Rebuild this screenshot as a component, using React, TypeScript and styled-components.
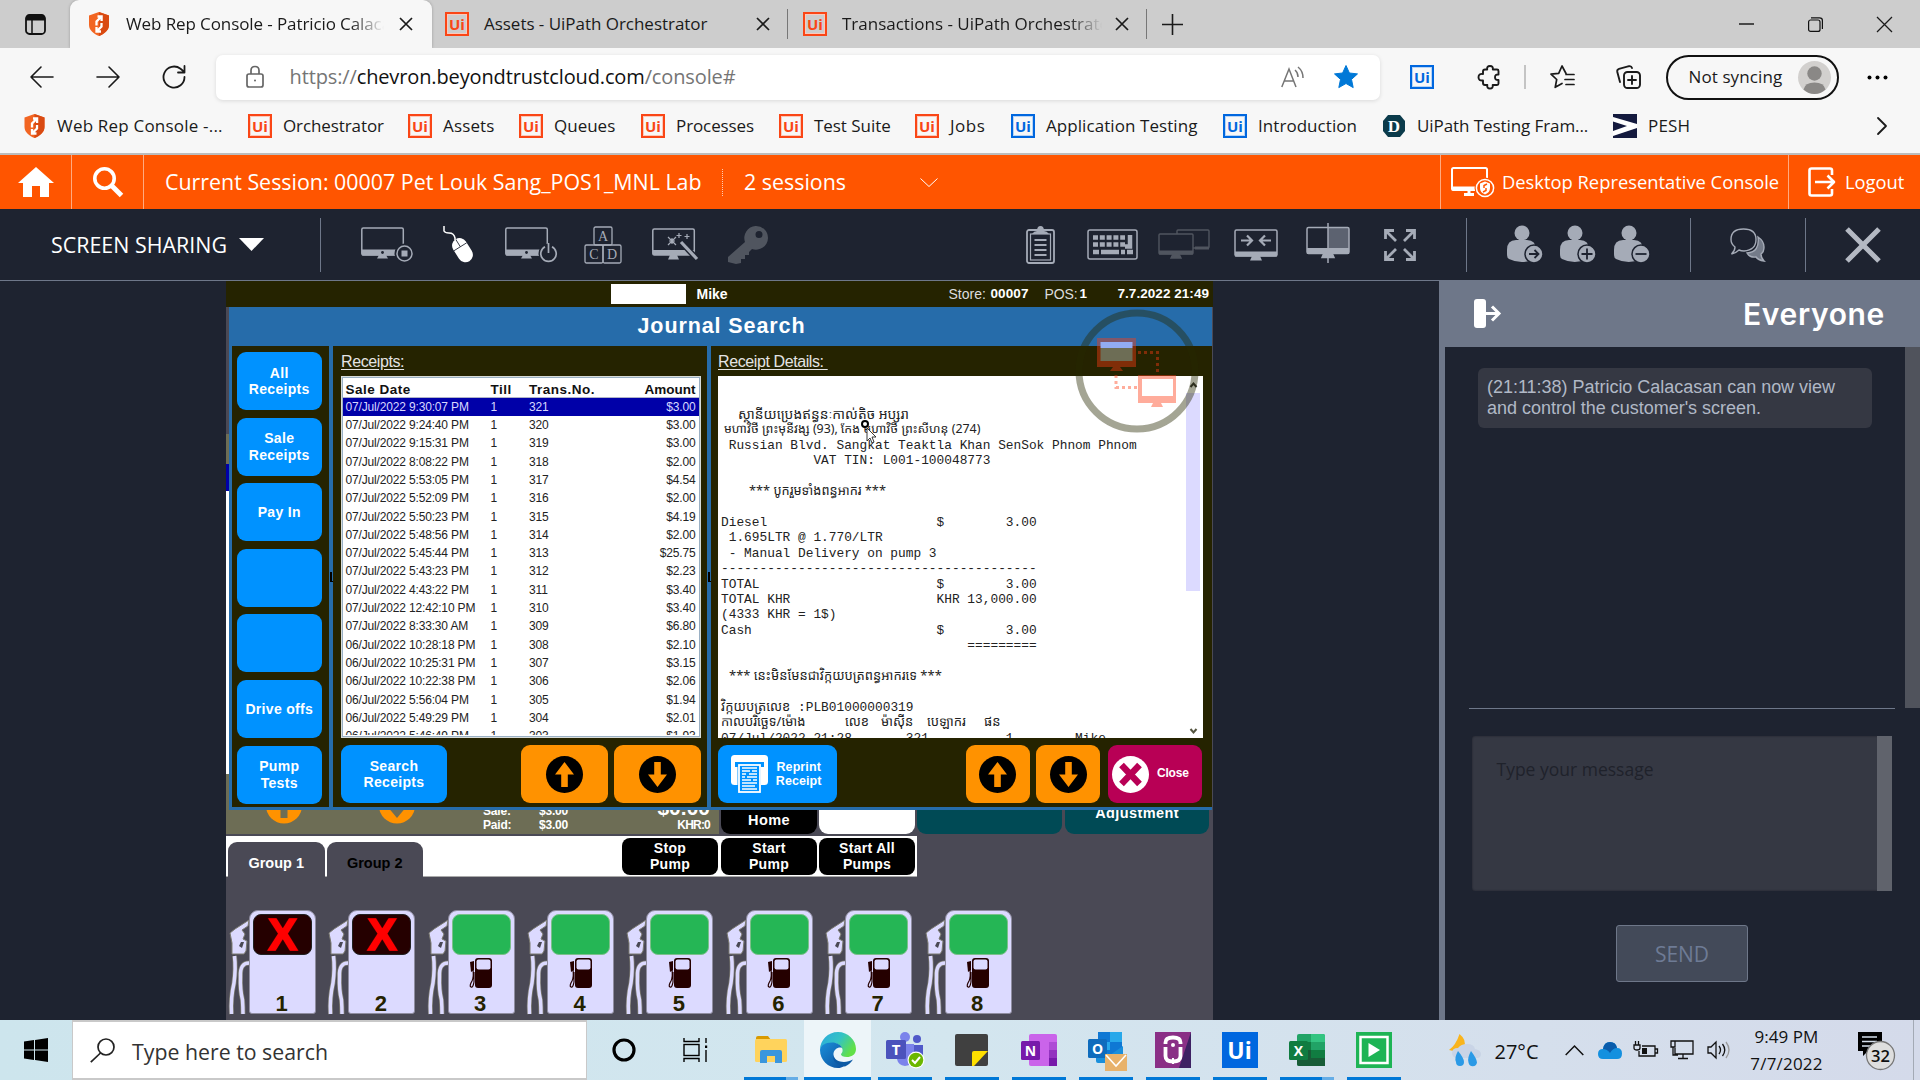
import React from 'react';
import styled, { createGlobalStyle, css } from 'styled-components';

const Global = createGlobalStyle`
  *, *::before, *::after { box-sizing: border-box; }
  html, body { margin: 0; padding: 0; background: #1e2330; }
  body { width: 1920px; height: 1080px; overflow: hidden; }
  svg { display: block; flex: none; overflow: visible; }
`;

const ui = `"Open Sans", "Noto Sans", sans-serif`;
const arial = `"Liberation Sans", Arial, sans-serif`;

const Page = styled.div`
  width: 1920px;
  height: 1080px;
  display: flex;
  flex-direction: column;
  overflow: hidden;
  font-family: ${ui};
`;

const Text = styled.span<{ $s: number; $ls?: number; $c?: string; $w?: number; $lh?: number; $pt?: number }>`
  font-size: ${p => p.$s}px;
  letter-spacing: ${p => p.$ls ?? 0}px;
  color: ${p => p.$c ?? 'inherit'};
  font-weight: ${p => p.$w ?? 400};
  white-space: pre;
  line-height: ${p => p.$lh ?? 1.3};
  padding-top: ${p => p.$pt ?? 0}px;
`;

const Slot = styled.div<{ $w: number; $ml?: number }>`
  flex: none;
  width: ${p => p.$w}px;
  margin-left: ${p => p.$ml ?? 0}px;
  display: flex;
  align-items: center;
  white-space: nowrap;
`;

const Rule = styled.div<{ $h: number; $ml: number; $c: string; $w?: number }>`
  flex: none;
  width: ${p => p.$w ?? 1}px;
  height: ${p => p.$h}px;
  margin-left: ${p => p.$ml}px;
  background: ${p => p.$c};
`;

/* ---------- Browser chrome ---------- */

const TabStrip = styled.div`
  height: 48px;
  flex: none;
  background: #cdcdcd;
  display: flex;
  align-items: center;
  color: #1a1a1a;
`;

const ActiveTab = styled.div`
  width: 362px;
  height: 48px;
  margin-left: 24px;
  background: #f7f7f7;
  border-radius: 9px 9px 0 0;
  box-shadow: 0 0 3px rgba(0, 0, 0, 0.25);
  display: flex;
  align-items: center;
`;

const Fade = styled.div<{ $w: number; $ml?: number }>`
  width: ${p => p.$w}px;
  margin-left: ${p => p.$ml ?? 15}px;
  overflow: hidden;
  flex: none;
  mask-image: linear-gradient(90deg, #000 calc(100% - 34px), transparent);
`;

const NavBar = styled.div`
  height: 58px;
  flex: none;
  background: #f7f7f7;
  display: flex;
  align-items: center;
  position: relative;
  z-index: 1;
`;

const AddressBar = styled.div`
  width: 1164px;
  height: 45px;
  margin-left: 30px;
  background: #fff;
  border-radius: 7px;
  box-shadow: 0 1px 4px rgba(0, 0, 0, 0.12);
  display: flex;
  align-items: center;
`;

const ProfilePill = styled.div`
  width: 173px;
  height: 45px;
  margin-left: 25px;
  border: 2px solid #111;
  border-radius: 23px;
  display: flex;
  align-items: center;
  padding-left: 21px;
  color: #1a1a1a;
`;

const Bookmarks = styled.div`
  height: 49px;
  flex: none;
  background: #f7f7f7;
  border-bottom: 2px solid #bcbcbc;
  display: flex;
  align-items: center;
  padding: 0 0 7px 23px;
  color: #1a1a1a;
`;

const Bookmark = styled.div<{ $w: number }>`
  width: ${p => p.$w}px;
  flex: none;
  display: flex;
  align-items: center;
  gap: 11px;
`;

const UiMark = styled.div<{ $blue?: boolean }>`
  width: 24px;
  height: 24px;
  flex: none;
  border: 2px solid ${p => (p.$blue ? '#0067df' : '#fa4616')};
  color: ${p => (p.$blue ? '#0067df' : '#fa4616')};
  outline: 1px solid ${p => (p.$blue ? '#b8d4f5' : '#fbc9bb')};
  outline-offset: -3px;
  display: flex;
  align-items: center;
  justify-content: center;
  font: 700 15px/1 ${ui};
`;

const Close = ({ s = 12, w = 1.7, c = '#1a1a1a' }: { s?: number; w?: number; c?: string }) => (
  <svg width={s} height={s} viewBox="0 0 12 12" stroke={c} strokeWidth={w}>
    <path d="M0 0L12 12M12 0L0 12" />
  </svg>
);

const Shield = ({ w = 20 }: { w?: number }) => (
  <svg width={w} height="24" viewBox="0 0 20 24">
    <path d="M10 0L20 3.5V13C20 18.5 15 22 10 24C5 22 0 18.5 0 13V3.5Z" fill="#f26522" />
    <path d="M10 0L20 3.5V13C20 18.5 15 22 10 24Z" fill="#d94a12" />
    <path d="M7.500 13.500V9.500L12 5M8.500 4.500H12.600V9" fill="none" stroke="#fff" strokeWidth="2.300" />
    <path d="M12.500 11V14.500L8 19M12 19.500H7.500V15" fill="none" stroke="#fff" strokeWidth="2.300" />
  </svg>
);

const TestMark = () => (
  <svg width="24" height="24" viewBox="0 0 24 24">
    <path d="M6 1H18L23 7V17L18 23H6L1 17V7Z" fill="#0b3b4b" />
    <text x="12" y="18" textAnchor="middle" fontFamily="Liberation Serif" fontWeight="700" fontSize="17" fill="#fff">D</text>
  </svg>
);

const PeshMark = () => (
  <svg width="24" height="24" viewBox="0 0 24 24">
    <path d="M0 0H24V24H0Z" fill="#141a3e" />
    <path d="M0 3L24 10V14L0 22V17L14 12L0 7.500Z" fill="#fff" />
  </svg>
);

type BM = { icon: 'shield' | 'o' | 'b' | 'd' | 'p'; label: string; w: number; ls?: number };
const bookmarks: BM[] = [
  { icon: 'shield', label: 'Web Rep Console -...', w: 225, ls: 0.2 },
  { icon: 'o', label: 'Orchestrator', w: 160, ls: -0.1 },
  { icon: 'o', label: 'Assets', w: 111, ls: 0.15 },
  { icon: 'o', label: 'Queues', w: 122 },
  { icon: 'o', label: 'Processes', w: 138, ls: -0.1 },
  { icon: 'o', label: 'Test Suite', w: 136, ls: -0.05 },
  { icon: 'o', label: 'Jobs', w: 96, ls: 0.5 },
  { icon: 'b', label: 'Application Testing', w: 212, ls: 0.07 },
  { icon: 'b', label: 'Introduction', w: 159, ls: 0.05 },
  { icon: 'd', label: 'UiPath Testing Fram...', w: 231, ls: -0.08 },
  { icon: 'p', label: 'PESH', w: 264, ls: 0.2 },
];

const BookmarkIcon = ({ kind }: { kind: BM['icon'] }) => {
  if (kind === 'shield') return <Shield w={23} />;
  if (kind === 'd') return <TestMark />;
  if (kind === 'p') return <PeshMark />;
  return <UiMark $blue={kind === 'b'}>Ui</UiMark>;
};

const line = { fill: 'none', stroke: '#1a1a1a', strokeWidth: 1.6, strokeLinecap: 'round', strokeLinejoin: 'round' } as const;

const Browser = () => (
  <>
    <TabStrip>
      <Slot $w={21} $ml={25}>
        <svg width="21" height="21" viewBox="0 0 21 21">
          <rect x="1" y="1" width="19" height="19" rx="3.500" fill="none" stroke="#111" strokeWidth="1.800" />
          <path d="M1 4Q1 1 4 1H17Q20 1 20 4V6.500H1Z" fill="#111" />
          <path d="M7 6V20" stroke="#111" strokeWidth="1.500" />
        </svg>
      </Slot>
      <ActiveTab>
        <Slot $w={20} $ml={19}><Shield /></Slot>
        <Fade $w={258} $ml={17}><Text $s={17} $ls={-0.1}>Web Rep Console - Patricio Calacasan</Text></Fade>
        <Slot $w={12} $ml={16}><Close /></Slot>
      </ActiveTab>
      <Slot $w={24} $ml={13}><UiMark>Ui</UiMark></Slot>
      <Slot $w={273} $ml={15}><Text $s={17} $ls={-0.03}>Assets - UiPath Orchestrator</Text></Slot>
      <Slot $w={12}><Close /></Slot>
      <Rule $h={30} $ml={18} $c="#777" />
      <Slot $w={24} $ml={15}><UiMark>Ui</UiMark></Slot>
      <Fade $w={260}><Text $s={17}>Transactions - UiPath Orchestrator</Text></Fade>
      <Slot $w={12} $ml={14}><Close /></Slot>
      <Rule $h={30} $ml={18} $c="#777" />
      <Slot $w={21} $ml={15}>
        <svg width="21" height="21" viewBox="0 0 21 21" stroke="#1a1a1a" strokeWidth="1.600"><path d="M10.500 0V21M0 10.500H21" /></svg>
      </Slot>
      <Slot $w={15} $ml={556}><svg width="15" height="2"><path d="M0 1H15" stroke="#111" strokeWidth="1.400" /></svg></Slot>
      <Slot $w={15} $ml={54}>
        <svg width="15" height="15" viewBox="0 0 15 15" fill="none" stroke="#111" strokeWidth="1.200">
          <rect x=".6" y="3" width="11.400" height="11.400" rx="2" /><path d="M3 .8H11.500Q14.400 .8 14.400 3.500V12" />
        </svg>
      </Slot>
      <Slot $w={15} $ml={54}><Close s={15} w={1} /></Slot>
    </TabStrip>
    <NavBar>
      <Slot $w={24} $ml={30}><svg width="24" height="22" viewBox="0 0 24 22" {...line}><path d="M23 11H1M11 1L1 11L11 21" /></svg></Slot>
      <Slot $w={24} $ml={42}><svg width="24" height="22" viewBox="0 0 24 22" {...line}><path d="M1 11H23M13 1L23 11L13 21" /></svg></Slot>
      <Slot $w={24} $ml={42}><svg width="24" height="24" viewBox="0 0 24 24" {...line} strokeWidth={1.800}><path d="M22.500 12A10.500 10.500 0 1 1 18.500 3.800L22.500 7M22.500 1V7.500H16" /></svg></Slot>
      <AddressBar>
        <Slot $w={18} $ml={30}>
          <svg width="18" height="24" viewBox="0 0 18 24" fill="none" stroke="#666" strokeWidth="1.700">
            <rect x="1" y="9" width="16" height="13" rx="2" /><path d="M5 9V5.500Q5 1.500 9 1.500T13 5.500V9" /><circle cx="9" cy="15.500" r="1" fill="#666" stroke="none" />
          </svg>
        </Slot>
        <Slot $w={991} $ml={25.5}>
          <Text $s={20} $ls={-0.13} $c="#757575">https://</Text>
          <Text $s={20} $ls={-0.13} $c="#111">chevron.beyondtrustcloud.com</Text>
          <Text $s={20} $ls={-0.13} $c="#757575">/console#</Text>
        </Slot>
        <Slot $w={23}>
          <svg width="24" height="22" viewBox="0 0 24 22" fill="none" stroke="#757575" strokeWidth="1.500"><path d="M.8 21L8 3L15 21M3.300 15H12.700M14 4Q17 6.500 17 11M17 1Q22 5 22 12" /></svg>
        </Slot>
        <Slot $w={24} $ml={30}>
          <svg width="24" height="24" viewBox="0 0 24 24"><path d="M12 .5L15.400 8L23.500 8.900L17.500 14.400L19.200 22.600L12 18.500L4.800 22.600L6.500 14.400L.5 8.900L8.600 8Z" fill="#0078d7" stroke="#0078d7" strokeLinejoin="round" /></svg>
        </Slot>
      </AddressBar>
      <Slot $w={24} $ml={30}><UiMark $blue>Ui</UiMark></Slot>
      <Slot $w={24} $ml={42.5}>
        <svg width="24" height="24" viewBox="0 0 24 24" {...line} strokeWidth={1.900}>
          <path d="M8 4.500H10.200Q9.600 1 13 1T15.800 4.500H20Q21.500 4.500 21.500 6V9.500Q18 9.200 18 12.200T21.500 15V18.500Q21.500 20 20 20H15.700Q16.300 23.500 13 23.500T10.300 20H8Q6 20 6 18V15.500Q1.500 16 1.500 12.200T6 9V6.500Q6 4.500 8 4.500Z" />
        </svg>
      </Slot>
      <Rule $h={24} $ml={23} $c="#c4c4c4" $w={2} />
      <Slot $w={25} $ml={24}>
        <svg width="25" height="24" viewBox="0 0 25 24" {...line} strokeWidth={1.700}>
          <path d="M16 8.500L12 1L8.700 8.300L1 9.200L6.700 14.500L5.200 22.300L12 18.500M16 9.500H24M15 14.500H24M16 19.500H24" />
        </svg>
      </Slot>
      <Slot $w={25} $ml={41}>
        <svg width="25" height="24" viewBox="0 0 25 24" {...line} strokeWidth={1.900}>
          <rect x="8" y="7" width="16" height="16" rx="3.500" /><path d="M16 11V19M12 15H20M4 17L1.300 7Q.8 4.500 3 3.800L13 1.200Q15.300 .7 16 3" />
        </svg>
      </Slot>
      <ProfilePill>
        <Slot $w={109}><Text $s={17} $ls={0.1}>Not syncing</Text></Slot>
        <svg width="33" height="33" viewBox="0 0 33 33">
          <circle cx="16.500" cy="16.500" r="16.500" fill="#d2d0ce" /><circle cx="16.500" cy="12.500" r="7.200" fill="#8a8886" />
          <path d="M5.500 28.500Q7 21.500 16.500 21.500T27.500 28.500Q22.500 33 16.500 33T5.500 28.500Z" fill="#8a8886" />
        </svg>
      </ProfilePill>
      <Slot $w={21} $ml={28.5}><svg width="21" height="5" viewBox="0 0 21 5"><circle cx="2.500" cy="2.500" r="2" /><circle cx="10.500" cy="2.500" r="2" /><circle cx="18.500" cy="2.500" r="2" /></svg></Slot>
    </NavBar>
    <Bookmarks>
      {bookmarks.map(b => (
        <Bookmark key={b.label} $w={b.w}>
          <BookmarkIcon kind={b.icon} />
          <Text $s={17} $ls={b.ls ?? 0}>{b.label}</Text>
        </Bookmark>
      ))}
      <svg width="10" height="18" viewBox="0 0 10 18" {...line} strokeWidth={1.800}><path d="M1 1L9 9L1 17" /></svg>
    </Bookmarks>
  </>
);

/* ---------- Console header ---------- */

const OrangeBar = styled.div`
  height: 54px;
  flex: none;
  background: #ff5500;
  color: #fff;
  display: flex;
  align-items: center;
`;

const Dotted = styled.div`
  height: 27px;
  border-left: 1px dotted rgba(255, 255, 255, 0.7);
`;

const OrangeHeader = () => (
  <OrangeBar>
    <Slot $w={36} $ml={18}>
      <svg width="36" height="30" viewBox="0 0 36 30" fill="#fff"><path d="M18 0L36 16H31V30H22V19H14V30H5V16H0Z" /></svg>
    </Slot>
    <Rule $h={54} $ml={17} $c="#ffaa80" />
    <Slot $w={32} $ml={20}>
      <svg width="32" height="30" viewBox="0 0 32 30" fill="none" stroke="#fff"><circle cx="12.500" cy="11.500" r="9.700" strokeWidth="3.600" /><path d="M19.500 18.500L29.500 28.500" strokeWidth="5" /></svg>
    </Slot>
    <Rule $h={54} $ml={19} $c="#ffaa80" />
    <Slot $w={557} $ml={21}><Text $s={21.4}>Current Session: 00007 Pet Louk Sang_POS1_MNL Lab</Text></Slot>
    <Dotted />
    <Slot $w={176} $ml={21}><Text $s={21.4}>2 sessions</Text></Slot>
    <svg width="18" height="9" viewBox="0 0 18 9" fill="none" stroke="#fff"><path d="M.5 .5L9 8.500L17.500 .5" /></svg>
    <Rule $h={54} $ml={502} $c="#ffaa80" />
    <Slot $w={44} $ml={10}>
      <svg width="44" height="30" viewBox="0 0 44 30" fill="none" stroke="#fff" strokeWidth="2">
        <rect x="1" y="1" width="35" height="22" rx="1.500" /><path d="M1 21.500H28" strokeWidth="4" /><path d="M18 23V27M13 27.500H23" strokeWidth="3" />
        <circle cx="34" cy="21" r="9.500" fill="#ff5500" stroke="#ff5500" /><circle cx="34" cy="21" r="8.600" strokeWidth="1.500" />
        <path d="M34 14.500L39 16.500V21Q39 25.500 34 27.500Q29 25.500 29 21V16.500Z" fill="#fff" stroke="none" /><path d="M33 21V18.500L36 17M35 21V23.500L32 25" stroke="#ff5500" strokeWidth="1.500" />
      </svg>
    </Slot>
    <Slot $w={278} $ml={7}><Text $s={18.35}>Desktop Representative Console</Text></Slot>
    <Rule $h={54} $ml={8} $c="#ffaa80" />
    <Slot $w={28} $ml={19}>
      <svg width="28" height="30" viewBox="0 0 28 30" fill="none" stroke="#fff" strokeWidth="2.600" strokeLinejoin="round">
        <path d="M24 8V3.500Q24 1.500 22 1.500H3.500Q1.500 1.500 1.500 3.500V26.500Q1.500 28.500 3.500 28.500H22Q24 28.500 24 26.500V22" /><path d="M7 15H26M19.500 8.500L26 15L19.500 21.500" />
      </svg>
    </Slot>
    <Slot $w={60} $ml={9}><Text $s={18.35}>Logout</Text></Slot>
  </OrangeBar>
);

const ToolBar = styled.div`
  height: 72px;
  flex: none;
  background: #1e2330;
  border-bottom: 1px solid #6e7789;
  display: flex;
  align-items: center;
  color: #fff;
`;

const g = '#a5abb7';
const Monitor = ({ children, c = g }: { children?: React.ReactNode; c?: string }) => (
  <svg width="52" height="36" viewBox="0 0 52 36" fill="none" stroke={c} strokeWidth="1.500">
    <rect x=".8" y="1" width="41.500" height="27" rx="1.500" /><path d="M1 25.500H42" strokeWidth="6" />
    <path d="M18 28H25L27 31.500H16Z" fill={c} stroke="none" /><circle cx="21.500" cy="25.500" r="1.400" fill="#1e2330" stroke="none" />
    {children}
  </svg>
);

const Person = ({ sign }: { sign: string }) => (
  <svg width="36" height="37" viewBox="0 0 36 37" fill={g}>
    <circle cx="15" cy="7" r="7.500" /><path d="M0 24Q0 14 9 14H20Q29 14 29 24V33Q14 39 2 33Q0 32 0 28Z" />
    <circle cx="27" cy="28" r="9" fill={g} stroke="#1e2330" strokeWidth="1.500" />
    <path d={sign} fill="none" stroke="#1e2330" strokeWidth="1.800" />
  </svg>
);

const Tools = () => (
  <ToolBar>
    <Slot $w={176} $ml={51}><Text $s={21.4} $ls={0.02}>SCREEN SHARING</Text></Slot>
    <Slot $w={25} $ml={12}><svg width="25" height="13" viewBox="0 0 25 13"><path d="M0 0H25L12.500 13Z" fill="#fff" /></svg></Slot>
    <Rule $h={54} $ml={56} $c="#6e7789" />
    <Slot $w={52} $ml={40}>
      <Monitor><circle cx="43.500" cy="26.500" r="9" fill="#1e2330" stroke="#1e2330" strokeWidth="2" /><circle cx="43.500" cy="26.500" r="7.500" /><rect x="40.500" y="23.500" width="6" height="6" fill={g} stroke="none" /></Monitor>
    </Slot>
    <Slot $w={33} $ml={30}>
      <svg width="33" height="37" viewBox="0 0 33 37" fill="none">
        <g transform="rotate(-32 20 25)"><rect x="12.500" y="11" width="15" height="26" rx="7.500" fill="#fff" /><path d="M12.500 20H27.500M20 11V20" stroke="#1e2330" strokeWidth=".8" /></g>
        <path d="M1 0V5Q2 7 6 7Q11 7 12 12V14" stroke="#fff" strokeWidth="1.500" />
      </svg>
    </Slot>
    <Slot $w={52} $ml={29}>
      <Monitor><circle cx="43.500" cy="26.500" r="9" fill="#1e2330" stroke="#1e2330" strokeWidth="2" /><path d="M40 19.800A7.700 7.700 0 1 0 47 19.800M43.500 16V26" strokeWidth="1.700" /></Monitor>
    </Slot>
    <Slot $w={38} $ml={27}>
      <svg width="38" height="38" viewBox="0 0 38 38" fill="none" stroke={g} strokeWidth="1.300">
        <rect x="10" y="1" width="18" height="18" rx="1.500" /><rect x="1" y="19" width="18" height="18" rx="1.500" /><rect x="19" y="19" width="18" height="18" rx="1.500" />
        <g fill={g} stroke="none" fontFamily="Liberation Serif" fontSize="14" textAnchor="middle"><text x="19" y="15">A</text><text x="10" y="33">C</text><text x="28" y="33">D</text></g>
      </svg>
    </Slot>
    <Slot $w={47} $ml={29.5}>
      <svg width="47" height="34" viewBox="0 0 47 34" fill="none" stroke={g} strokeWidth="1.500">
        <rect x=".8" y="1" width="41.500" height="26" rx="1.500" /><path d="M1 24.500H42" strokeWidth="5" /><path d="M18 27H25L27 31.500H16Z" fill={g} stroke="none" />
        <path d="M30 15L45 31" stroke="#1e2330" strokeWidth="6" /><path d="M29 14L45 31" strokeWidth="3.200" />
        <path d="M16 9L24 17M24 9L16 17M20 10V16M17 13H23M27 5V10M24.500 7.500H29.500M35 6V11M32.500 8.500H37.500" strokeWidth="1.200" />
      </svg>
    </Slot>
    <Slot $w={40} $ml={29.5}>
      <svg width="40" height="38" viewBox="0 0 40 38"><path d="M27.500 0A12 12 0 0 1 40 12A12 12 0 0 1 24 23L21 26V29H17V33H13V37L8 38L0 36V31L17 16A12 12 0 0 1 27.500 0ZM31 5A3.500 3.500 0 1 0 31 12A3.500 3.500 0 0 0 31 5Z" fill="#50555f" fillRule="evenodd" /></svg>
    </Slot>
    <Slot $w={29} $ml={258}>
      <svg width="29" height="38" viewBox="0 0 29 38" fill="none" stroke={g} strokeWidth="1.800">
        <rect x="1" y="4" width="27" height="33" rx="2" /><rect x="4.500" y="8" width="20" height="26" strokeWidth="1.200" /><path d="M6 8Q8 5 11 5Q11 0 14.500 0T18 5Q21 5 23 8Z" fill={g} stroke="none" /><path d="M8.500 14H20.500M8.500 19H20.500M8.500 24H20.500M8.500 29H20.500" />
      </svg>
    </Slot>
    <Slot $w={51} $ml={32}>
      <svg width="51" height="31" viewBox="0 0 51 31" fill="none" stroke={g}>
        <rect x="1" y="1" width="49" height="29" rx="2" strokeWidth="1.500" /><path d="M6 8.500H38M6 15.500H38" strokeWidth="4.500" strokeDasharray="5 1.800" /><path d="M6 23H12M14 23H32M34 23H38M40 23H46M43 6V17.500H38" strokeWidth="4.500" />
      </svg>
    </Slot>
    <Slot $w={52} $ml={20}>
      <svg width="52" height="31" viewBox="0 0 52 31" fill="none" stroke="#50555f" strokeWidth="1.400">
        <rect x="19" y="1" width="32" height="18" rx="1" /><path d="M37 19H51" strokeWidth="3" /><rect x="1" y="5" width="34" height="20" rx="1" fill="#1e2330" /><path d="M1 23.500H35" strokeWidth="4" /><path d="M15 25H21L23 29H13Z" fill="#50555f" />
      </svg>
    </Slot>
    <Slot $w={44} $ml={24}>
      <svg width="44" height="32" viewBox="0 0 44 32" fill="none" stroke={g} strokeWidth="1.500">
        <rect x="1" y="1" width="42" height="26" rx="1.500" /><path d="M1 25H43" strokeWidth="5" /><path d="M18 27H26L28 31.500H16Z" fill={g} stroke="none" /><path d="M7 11.500H17M13 6.500L18 11.500L13 16.500M37 11.500H27M31 6.500L26 11.500L31 16.500" strokeWidth="2.200" />
      </svg>
    </Slot>
    <Slot $w={44} $ml={28}>
      <svg width="44" height="46" viewBox="0 0 44 46" fill="none" stroke={g} strokeWidth="1.500">
        <rect x="22" y="6" width="21" height="22" fill="#5c6270" stroke="none" /><rect x="1" y="5.500" width="42" height="26" rx="1.500" /><path d="M1 29H43" strokeWidth="6" /><path d="M18 31H26L28 35.500H16ZM22 1V41" fill={g} />
      </svg>
    </Slot>
    <Slot $w={32} $ml={34}>
      <svg width="32" height="32" viewBox="0 0 32 32" fill="none" stroke={g} strokeWidth="2.800"><path d="M1.500 10V1.500H10M2 2L12 12M22 1.500H30.500V10M30 2L20 12M1.500 22V30.500H10M2 30L12 20M22 30.500H30.500V22M30 30L20 20" /></svg>
    </Slot>
    <Rule $h={54} $ml={50} $c="#6e7789" />
    <Slot $w={36} $ml={39.5}><Person sign="M22 28H31M27.500 24L31.500 28L27.500 32" /></Slot>
    <Slot $w={36} $ml={17.5}><Person sign="M21.500 28H32.500M27 22.500V33.500" /></Slot>
    <Slot $w={36} $ml={18}><Person sign="M21.500 28H32.500" /></Slot>
    <Rule $h={54} $ml={40} $c="#6e7789" />
    <Slot $w={36} $ml={39}>
      <svg width="36" height="34" viewBox="0 0 36 34" fill="none" stroke={g} strokeWidth="1.400">
        <path d="M17 25Q30 24 28 9Q34 13 34 19Q34 24 31 26Q31 30 34 33Q28 32 26 29Q20 30 17 25Z" fill="#747b89" /><path d="M13.500 1Q26 1 26 11.500T14 23Q11 23 9 22Q6 25 1.500 26Q5 23 5 19Q1 16 1 11.500Q1 1 13.500 1Z" fill="#1e2330" />
      </svg>
    </Slot>
    <Rule $h={54} $ml={39} $c="#6e7789" />
    <Slot $w={32} $ml={41}><Close s={32} w={1.900} c="#b4b9c3" /></Slot>
  </ToolBar>
);

/* ---------- Remote POS screen ---------- */

const Main = styled.div`
  height: 739px;
  flex: none;
  display: flex;
  background: #1e2330;
`;

const Pos = styled.div`
  position: relative;
  width: 987px;
  height: 739px;
  margin-left: 226px;
  flex: none;
  overflow: hidden;
  background: #4a4955;
  font-family: ${arial};
  display: flex;
  flex-direction: column;
`;

const PosTop = styled.div`
  height: 26px;
  flex: none;
  background: #252300;
  color: #fff;
  display: flex;
  align-items: center;
`;

const BlankBox = styled.div`
  width: 75px;
  height: 20px;
  margin-left: 385px;
  background: #fff;
`;

const DialogRow = styled.div`
  display: flex;
  height: 503px;
  flex: none;
  padding-right: 1px;
`;

const Behind = styled.div`
  width: 3px;
  flex: none;
  background: linear-gradient(#4a4955 127px, #6d6d55 127px 157px, #0000a8 157px 184px, #fff 184px 467px, #6d6d55 467px);
`;

const Dialog = styled.div`
  flex: 1;
  background: #266caa;
  display: flex;
  flex-direction: column;
  padding: 0 0 3px 3px;
`;

const DialogTitle = styled.div`
  height: 39px;
  flex: none;
  display: flex;
  align-items: center;
  justify-content: center;
  color: #fff;
  padding-right: 1px;
`;

const Panels = styled.div`
  flex: 1;
  display: flex;
  gap: 4px;
`;

const Panel = styled.div<{ $w: number; $pad: string }>`
  width: ${p => p.$w}px;
  flex: none;
  background: #252300;
  padding: ${p => p.$pad};
  display: flex;
  flex-direction: column;
`;

const PosButton = styled.div<{ $w: number; $bg?: string; $ml?: number }>`
  width: ${p => p.$w}px;
  height: 58px;
  flex: none;
  margin-left: ${p => p.$ml ?? 0}px;
  background: ${p => p.$bg ?? '#0092ff'};
  border-radius: 9px;
  display: flex;
  align-items: center;
  justify-content: center;
  text-align: center;
  color: #fff;
  font: 700 14px/16.4px ${arial};
  letter-spacing: 0.3px;
  white-space: pre;
`;

const SideButtons = styled.div`
  display: flex;
  flex-direction: column;
  gap: 7.6px;
`;

const PanelLabel = styled.div`
  height: 22px;
  margin-bottom: 3px;
  color: #e4e4e4;
  font-size: 16px;
  letter-spacing: -0.4px;
  line-height: 22px;
  text-decoration: underline;
  text-underline-offset: 2px;
  white-space: pre;
`;

const Table = styled.div`
  height: 362px;
  background: #fff;
  border: 1px solid #d8dcd8;
  box-shadow: inset 0 0 0 1px #9ab0c4;
  padding: 1px 1px 2px;
  overflow: hidden;
`;

const Clip = styled.div`
  height: 100%;
  overflow: hidden;
`;

const cols = css`
  display: grid;
  grid-template-columns: 145px 38.5px 1fr auto;
  padding: 0 3.5px 0 2.5px;
  align-items: center;
`;

const HeadRow = styled.div`
  ${cols}
  height: 19.5px;
  font: 700 13.5px/18px ${arial};
  letter-spacing: 0.5px;
  padding-top: 3px;
  border-bottom: 1px solid #b0b4c8;
  color: #111;
`;

const HeadAmount = styled.span`
  letter-spacing: 0;
`;

const DataRow = styled.div<{ $on?: boolean }>`
  ${cols}
  height: 18.32px;
  font-size: 12px;
  letter-spacing: -0.16px;
  line-height: 18px;
  color: ${p => (p.$on ? '#d8d8ff' : '#222')};
  background: ${p => (p.$on ? '#0000a8' : 'transparent')};
`;

const ButtonRow = styled.div`
  display: flex;
  margin-top: 7px;
`;

const ReceiptBox = styled.div`
  width: 485px;
  height: 362px;
  background: #fff;
  display: flex;
  justify-content: space-between;
  overflow: hidden;
  color: #222;
`;

const ReceiptText = styled.div`
  padding: 31px 0 0 3px;
  font-family: "Liberation Mono", "Noto Sans Khmer", "Khmer OS", monospace;
  font-size: 12.83px;
`;

const RLine = styled.div<{ $pl?: number }>`
  height: 15.43px;
  line-height: 15.43px;
  padding-left: ${p => p.$pl ?? 0}px;
  white-space: pre;
`;

const Khmer = styled.span<{ $s?: number; $w?: number }>`
  display: inline-block;
  width: ${p => (p.$w ? `${p.$w}px` : 'auto')};
  height: 15.43px;
  font-family: "Noto Sans Khmer", "Khmer OS", "Noto Sans", sans-serif;
  font-size: ${p => p.$s ?? 13}px;
  line-height: 13px;
  vertical-align: top;
`;

const ScrollTrack = styled.div`
  width: 18px;
  padding: 6px 2px 4px 0;
  display: flex;
  flex-direction: column;
  align-items: center;
`;

const ScrollThumb = styled.div`
  width: 14px;
  height: 198px;
  margin: 5px 0 auto;
  background: #dcdaff;
`;

const Badge = styled.div`
  position: absolute;
  left: 849px;
  top: 28px;
`;

const Pointer = styled.div`
  position: absolute;
  left: 635px;
  top: 138px;
`;

const EdgeMark = styled.div<{ $x: number }>`
  position: absolute;
  left: ${p => p.$x}px;
  top: 291px;
  width: 3px;
  height: 10px;
  border-left: 2px solid #000;
  border-bottom: 1px solid #000;
`;

const Arrow = ({ down }: { down?: boolean }) => (
  <svg width="37" height="37" viewBox="0 0 37 37">
    <circle cx="18.500" cy="18.500" r="18.500" fill="#000" />
    <path d={down ? 'M15.200 6H21.800V18.500H28L18.500 31L9 18.500H15.200Z' : 'M15.200 31H21.800V18.500H28L18.500 6L9 18.500H15.200Z'} fill="#ff9200" />
  </svg>
);

const sales: [string, string, string][] = [
  ['07/Jul/2022 9:30:07 PM', '321', '$3.00'],
  ['07/Jul/2022 9:24:40 PM', '320', '$3.00'],
  ['07/Jul/2022 9:15:31 PM', '319', '$3.00'],
  ['07/Jul/2022 8:08:22 PM', '318', '$2.00'],
  ['07/Jul/2022 5:53:05 PM', '317', '$4.54'],
  ['07/Jul/2022 5:52:09 PM', '316', '$2.00'],
  ['07/Jul/2022 5:50:23 PM', '315', '$4.19'],
  ['07/Jul/2022 5:48:56 PM', '314', '$2.00'],
  ['07/Jul/2022 5:45:44 PM', '313', '$25.75'],
  ['07/Jul/2022 5:43:23 PM', '312', '$2.23'],
  ['07/Jul/2022 4:43:22 PM', '311', '$3.40'],
  ['07/Jul/2022 12:42:10 PM', '310', '$3.40'],
  ['07/Jul/2022 8:33:30 AM', '309', '$6.80'],
  ['06/Jul/2022 10:28:18 PM', '308', '$2.10'],
  ['06/Jul/2022 10:25:31 PM', '307', '$3.15'],
  ['06/Jul/2022 10:22:38 PM', '306', '$2.06'],
  ['06/Jul/2022 5:56:04 PM', '305', '$1.94'],
  ['06/Jul/2022 5:49:29 PM', '304', '$2.01'],
  ['06/Jul/2022 5:46:49 PM', '303', '$1.93'],
];

const JournalDialog = () => (
  <DialogRow>
    <Behind />
    <Dialog>
      <DialogTitle><Text $s={21.5} $w={700} $ls={0.9}>Journal Search</Text></DialogTitle>
      <Panels>
        <Panel $w={97} $pad="6px 0 0 5px">
          <SideButtons>
            {['All\nReceipts', 'Sale\nReceipts', 'Pay In', '', ' ', 'Drive offs', 'Pump\nTests'].map(t => (
              <PosButton key={t} $w={84.5}>{t}</PosButton>
            ))}
          </SideButtons>
        </Panel>
        <Panel $w={374} $pad="5px 6px 0 8px">
          <PanelLabel>Receipts:</PanelLabel>
          <Table>
            <Clip>
              <HeadRow><span>Sale Date</span><span>Till</span><span>Trans.No.</span><HeadAmount>Amount</HeadAmount></HeadRow>
              {sales.map(([d, n, a], i) => (
                <DataRow key={n} $on={i === 0}><span>{d}</span><span>1</span><span>{n}</span><span>{a}</span></DataRow>
              ))}
            </Clip>
          </Table>
          <ButtonRow>
            <PosButton $w={106}>{'Search\nReceipts'}</PosButton>
            <PosButton $w={87} $ml={74} $bg="#ff9200"><Arrow /></PosButton>
            <PosButton $w={87} $ml={6} $bg="#ff9200"><Arrow down /></PosButton>
          </ButtonRow>
        </Panel>
        <Panel $w={501} $pad="5px 0 0 7px">
          <PanelLabel>Receipt Details: </PanelLabel>
          <ReceiptBox>
            <ReceiptText>
              <RLine $pl={17}><Khmer $s={13.8}>ស្ថានីយប្រេងឥន្ធនៈកាល់តិច អប្សរា</Khmer></RLine>
              <RLine $pl={3}><Khmer $s={12.4}>មហាវិថី ព្រះមុនីវង្ស (93), កែង មហាវិថី ព្រះសីហនុ (274)</Khmer></RLine>
              <RLine> Russian Blvd. Sangkat Teaktla Khan SenSok Phnom Phnom</RLine>
              <RLine>{'            VAT TIN: L001-100048773'}</RLine>
              <RLine />
              <RLine $pl={28}><Khmer $s={12.8}>*** បូករួមទាំងពន្ធអាករ ***</Khmer></RLine>
              <RLine />
              <RLine>{'Diesel                      $        3.00'}</RLine>
              <RLine>{' 1.695LTR @ 1.770/LTR'}</RLine>
              <RLine>{' - Manual Delivery on pump 3'}</RLine>
              <RLine>{'-'.repeat(41)}</RLine>
              <RLine>{'TOTAL                       $        3.00'}</RLine>
              <RLine>{'TOTAL KHR                   KHR 13,000.00'}</RLine>
              <RLine>{'(4333 KHR = 1$)'}</RLine>
              <RLine>{'Cash                        $        3.00'}</RLine>
              <RLine>{'                                ========='}</RLine>
              <RLine />
              <RLine $pl={8}><Khmer>*** នេះមិនមែនជាវិក្កយបត្រពន្ធអាករទេ ***</Khmer></RLine>
              <RLine />
              <RLine><Khmer $w={77}>វិក្កយបត្រលេខ</Khmer>:PLB01000000319</RLine>
              <RLine>
                <Khmer $w={124}>កាលបរិច្ឆេទ/ម៉ោង</Khmer><Khmer $w={36}>លេខ</Khmer><Khmer $w={46}>ម៉ាស៊ីន</Khmer><Khmer $w={57}>បេឡាករ</Khmer><Khmer>ផន</Khmer>
              </RLine>
              <RLine>{'07/Jul/2022 21:28       321          1        Mike'}</RLine>
            </ReceiptText>
            <ScrollTrack>
              <svg width="7" height="6" viewBox="0 0 7 6" fill="none" stroke="#333" strokeWidth="2"><path d="M.5 5L3.500 1.500L6.500 5" /></svg>
              <ScrollThumb />
              <svg width="7" height="6" viewBox="0 0 7 6" fill="none" stroke="#555540" strokeWidth="2"><path d="M.5 1L3.500 4.500L6.500 1" /></svg>
            </ScrollTrack>
          </ReceiptBox>
          <ButtonRow>
            <PosButton $w={118.5}>
              <svg width="37" height="38" viewBox="0 0 37 38">
                <rect width="37" height="30" rx="3.500" fill="#fff" /><rect x="4" y="7" width="29" height="5" fill="#0092ff" />
                <path d="M6.500 9V30H30V9" fill="#0092ff" /><rect x="8" y="10" width="21" height="27" fill="#0092ff" stroke="#fff" strokeWidth="1.800" />
                <path d="M11 13H26M11 16H19M21 16H26M11 19H15M18 19H26M11 22H14M16 22H26M11 25H20M22 25H26M11 28H26M11 31H24M11 34H26" stroke="#fff" strokeWidth="1.700" />
              </svg>
              <Slot $w={48} $ml={8}><Text $s={12.5} $w={700} $ls={0.1} $lh={1.13}>{'Reprint\nReceipt'}</Text></Slot>
            </PosButton>
            <PosButton $w={64} $ml={129} $bg="#ff9200"><Arrow /></PosButton>
            <PosButton $w={64} $ml={6.5} $bg="#ff9200"><Arrow down /></PosButton>
            <PosButton $w={94.5} $ml={7.5} $bg="#b80055">
              <svg width="37" height="37" viewBox="0 0 37 37"><circle cx="18.500" cy="18.500" r="18.500" fill="#fff" /><path d="M9.500 9L27.500 28M27.500 9L9.500 28" stroke="#b80055" strokeWidth="6.500" /></svg>
              <Slot $w={41} $ml={8.5}><Text $s={12} $w={700} $ls={-0.2}>Close</Text></Slot>
            </PosButton>
          </ButtonRow>
        </Panel>
      </Panels>
    </Dialog>
  </DialogRow>
);

const Totals = styled.div`
  height: 24px;
  flex: none;
  display: flex;
  align-items: stretch;
  overflow: hidden;
`;

const TotalsLeft = styled.div`
  width: 493px;
  background: #6d6d55;
  color: #fff;
  display: flex;
  align-items: flex-end;
`;

const TotalCol = styled.div<{ $w: number; $ml: number; $right?: boolean }>`
  width: ${p => p.$w}px;
  margin-left: ${p => p.$ml}px;
  display: flex;
  flex-direction: column;
  align-items: ${p => (p.$right ? 'flex-end' : 'flex-start')};
  font: 700 12px/14px ${arial};
  letter-spacing: ${p => (p.$right ? -0.8 : -0.2)}px;
  padding-bottom: 2px;
`;

const BigTotal = styled.span`
  font-size: 21px;
  line-height: 17px;
  letter-spacing: 0;
  margin-bottom: 2px;
`;

const ArrowStub = styled.div<{ $ml: number }>`
  width: 36px;
  height: 37px;
  flex: none;
  margin: 0 0 10.5px ${p => p.$ml}px;
`;

const Stub = styled.div<{ $w: number; $ml: number; $bg: string; $pb?: number }>`
  width: ${p => p.$w}px;
  height: 24px;
  margin-left: ${p => p.$ml}px;
  background: ${p => p.$bg};
  border-radius: 0 0 9px 9px;
  display: flex;
  justify-content: center;
  align-items: flex-end;
  padding-bottom: ${p => p.$pb ?? 0}px;
  color: #fff;
  font: 700 14.5px/16px ${arial};
  letter-spacing: 0.4px;
`;

const GroupBar = styled.div`
  width: 691px;
  height: 41px;
  margin-top: 2px;
  flex: none;
  background: #fff;
  border-bottom: 1px solid #aaa;
  display: flex;
  align-items: flex-end;
  padding-left: 2px;
`;

const GroupTab = styled.div<{ $on?: boolean }>`
  width: 96.5px;
  height: 35px;
  margin: 0 2px -1px 0;
  background: #4a4955;
  border-radius: 9px 9px 0 0;
  display: flex;
  align-items: center;
  justify-content: center;
  padding-top: 6px;
  font: 700 14.5px/16px ${arial};
  color: ${p => (p.$on ? '#fff' : '#000')};
`;

const PumpAction = styled(PosButton)`
  height: 37px;
  margin-bottom: 1.5px;
  background: #000;
  border-radius: 8px;
`;

const PumpRow = styled.div`
  display: flex;
  padding: 33px 0 0 3px;
  gap: 12.36px;
`;

const Pump = styled.div`
  width: 87px;
  height: 104px;
  flex: none;
  display: flex;
`;

const PumpCard = styled.div`
  width: 67px;
  height: 104px;
  background: #dcdaff;
  border: 1px solid #8f8da0;
  border-radius: 9px 9px 3px 3px;
  display: flex;
  flex-direction: column;
  align-items: center;
  padding-top: 3px;
`;

const PumpScreen = styled.div<{ $bad: boolean }>`
  width: 59px;
  height: 41px;
  flex: none;
  border-radius: 8px;
  background: ${p => (p.$bad ? '#250000' : '#25b655')};
  border: 1px solid ${p => (p.$bad ? '#222' : '#7bc08a')};
  color: #ff0000;
  display: flex;
  align-items: center;
  justify-content: center;
  font: 700 44px/38px ${arial};
  -webkit-text-stroke: 1.5px #ff0000;
`;

const MiniBox = styled.div`
  height: 32px;
  flex: none;
  margin-top: 2px;
`;

const PumpNo = styled.div`
  font: 700 22px/24px ${arial};
  color: #252300;
  margin: 3px 2px 0 0;
`;

const Hose = () => (
  <svg width="20" height="104" viewBox="0 0 20 104">
    <path d="M20 10L6 19L1 23L3 33L3 44H15L17 41L18 31L14 29L16 24L13 20L19 16Z" fill="#dcdaff" stroke="#7b7a70" />
    <path d="M10 36L12 32H15L13 38Z" fill="#4a4955" />
    <path d="M5.500 46Q7 58 5 73Q1.500 88 2.500 104M20 53Q11 53 11.500 66Q11 80 13.500 90Q14 97 14 104" fill="none" stroke="#7b7a70" strokeWidth="5" />
    <path d="M5.500 46Q7 58 5 73Q1.500 88 2.500 104M20 53Q11 53 11.500 66Q11 80 13.500 90Q14 97 14 104" fill="none" stroke="#dcdaff" strokeWidth="3.500" />
  </svg>
);

const MiniPump = () => (
  <svg width="24" height="32" viewBox="0 0 24 32">
    <rect x="6" y="1" width="17" height="30" rx="3" fill="#250000" /><rect x="7.500" y="2.500" width="14" height="10" rx="2" fill="#dcdaff" />
    <path d="M1 5L5 4V13L2 15Z" fill="#250000" /><path d="M4 13Q5 20 3 24Q0 29 2 30T5 25V15" fill="none" stroke="#250000" strokeWidth="1.200" />
  </svg>
);

const Remote = () => (
  <Pos>
    <PosTop>
      <BlankBox />
      <Slot $w={252} $ml={10.5}><Text $s={14} $w={700}>Mike</Text></Slot>
      <Slot $w={42}><Text $s={14} $c="#ddd">Store:</Text></Slot>
      <Slot $w={54}><Text $s={13.5} $w={700} $ls={0.1}>00007</Text></Slot>
      <Slot $w={35}><Text $s={14} $c="#ddd" $ls={-0.1}>POS:</Text></Slot>
      <Slot $w={38}><Text $s={13.5} $w={700}>1</Text></Slot>
      <Text $s={13.5} $w={700} $ls={0.05}>7.7.2022 21:49</Text>
    </PosTop>
    <JournalDialog />
    <Totals>
      <TotalsLeft>
        <ArrowStub $ml={39.5}><svg width="36" height="37" viewBox="0 0 36 37"><circle cx="18" cy="18.500" r="18" fill="#ff9200" /><path d="M14.500 18H21.500V31H14.500Z" fill="#6d6d55" /></svg></ArrowStub>
        <ArrowStub $ml={77}><svg width="36" height="37" viewBox="0 0 36 37"><circle cx="18" cy="18.500" r="18" fill="#ff9200" /><path d="M8 19H28L18 31Z" fill="#6d6d55" /></svg></ArrowStub>
        <TotalCol $w={56} $ml={68.5}><span>Sale:</span><span>Paid:</span></TotalCol>
        <TotalCol $w={40} $ml={0}><span>$3.00</span><span>$3.00</span></TotalCol>
        <TotalCol $w={70} $ml={61} $right><BigTotal>$0.00</BigTotal><span>KHR:0</span></TotalCol>
      </TotalsLeft>
      <Stub $w={96} $ml={2} $bg="#000" $pb={6}>Home</Stub>
      <Stub $w={96} $ml={2} $bg="#fff" />
      <Stub $w={145} $ml={2} $bg="#004a55" />
      <Stub $w={144} $ml={3} $bg="#004a55" $pb={13}>Adjustment</Stub>
    </Totals>
    <GroupBar>
      <GroupTab $on>Group 1</GroupTab>
      <GroupTab>Group 2</GroupTab>
      <PumpAction $w={96} $ml={197}>{'Stop\nPump'}</PumpAction>
      <PumpAction $w={96} $ml={3}>{'Start\nPump'}</PumpAction>
      <PumpAction $w={96} $ml={2}>{'Start All\nPumps'}</PumpAction>
    </GroupBar>
    <PumpRow>
      {[1, 2, 3, 4, 5, 6, 7, 8].map(n => (
        <Pump key={n}>
          <Hose />
          <PumpCard>
            <PumpScreen $bad={n < 3}>{n < 3 ? 'X' : ''}</PumpScreen>
            <MiniBox>{n > 2 && <MiniPump />}</MiniBox>
            <PumpNo>{n}</PumpNo>
          </PumpCard>
        </Pump>
      ))}
    </PumpRow>
    <EdgeMark $x={104} />
    <EdgeMark $x={482} />
    <Badge>
      <svg width="124" height="124" viewBox="0 0 124 124" fill="none">
        <circle cx="62" cy="62" r="58" stroke="rgb(37,40,0)" strokeOpacity=".42" strokeWidth="7" />
        <g opacity=".42"><path d="M22 29H61V58H22Z" fill="#ff3c14" /><path d="M38 58H45L48 62H35Z" fill="#ff3c14" /></g>
        <path d="M25.500 33H57.500V39H25.500Z" fill="#92acf4" /><path d="M25.500 39H57.500V52H25.500Z" fill="#6d6d55" />
        <g opacity=".42"><path d="M63 66H101V94H63ZM67 70V87H98V70Z" fill="#ff3c14" fillRule="evenodd" /><path d="M78 94H86L88 98H76Z" fill="#ff3c14" /></g>
        <path d="M63 43.500H84M82.500 48V66M41 66V80M41 78.500H63" stroke="#ff3c14" strokeOpacity=".42" strokeWidth="3" strokeDasharray="3 3" />
      </svg>
    </Badge>
    <Pointer>
      <svg width="16" height="24" viewBox="0 0 16 24"><circle cx="4" cy="5" r="3" fill="#fff" stroke="#000" strokeWidth="2" /><path d="M6 9V22L9 19L11 24L13 23L11 18H15Z" fill="#fff" stroke="#222" strokeWidth=".9" /></svg>
    </Pointer>
  </Pos>
);

/* ---------- Chat panel ---------- */

const Chat = styled.div`
  width: 481px;
  height: 740px;
  margin: -1px 0 0 226px;
  flex: none;
  border-left: 6px solid #6e7789;
  display: flex;
  flex-direction: column;
  background: #1e2330;
`;

const ChatHead = styled.div`
  height: 67px;
  flex: none;
  background: #6e7789;
  color: #fff;
  display: flex;
  align-items: center;
  justify-content: space-between;
  padding: 1px 35px 0 29px;
  font: 600 30px/1 Inter, sans-serif;
  letter-spacing: 0.65px;
`;

const ChatLog = styled.div`
  height: 361px;
  flex: none;
  display: flex;
`;

const ChatBody = styled.div`
  width: 460px;
  padding: 21px 33px 0;
`;

const Bubble = styled.div`
  width: 394px;
  height: 60px;
  border-radius: 6px;
  background: #353843;
  color: #b1b8c6;
  padding: 9px 9px;
  font: 18px/21px ${arial};
  letter-spacing: -0.02px;
  white-space: pre;
`;

const ChatScroll = styled.div`
  width: 15px;
  background: #50535c;
`;

const ChatRule = styled.div`
  height: 1px;
  margin: 0 25px 0 24px;
  background: #6e7789;
`;

const MessageBox = styled.div`
  width: 420px;
  height: 155px;
  margin: 27px 0 0 27px;
  background: #353843;
  box-shadow: inset 0 0 2px #1b1e28;
  border-radius: 3px 0 0 3px;
  display: flex;
  justify-content: space-between;
  padding-left: 24.5px;
`;

const MessageHint = styled.div`
  padding-top: 22px;
  color: #1f222b;
`;

const SendButton = styled.div`
  width: 132px;
  height: 57px;
  margin: 34px 0 0 171px;
  border: 1px solid #6e7789;
  border-radius: 3px;
  background: #434a59;
  color: #6e7b95;
  display: flex;
  align-items: center;
  justify-content: center;
  padding-top: 2px;
`;

const ChatPanel = () => (
  <Chat>
    <ChatHead>
      <svg width="27" height="30" viewBox="0 0 27 30" fill="none" stroke="#fff" strokeWidth="3"><rect width="12" height="29" rx="3" fill="#fff" stroke="none" /><path d="M12 14.500H25M18 7.500L25 14.500L18 21.500" /></svg>
      <span>Everyone</span>
    </ChatHead>
    <ChatLog>
      <ChatBody><Bubble>{"(21:11:38) Patricio Calacasan can now view\nand control the customer's screen."}</Bubble></ChatBody>
      <ChatScroll />
    </ChatLog>
    <ChatRule />
    <MessageBox>
      <MessageHint><Text $s={17.5}>Type your message</Text></MessageHint>
      <Slot $w={15}><Rule $h={155} $w={15} $ml={0} $c="#60636c" /></Slot>
    </MessageBox>
    <SendButton><Text $s={21}>SEND</Text></SendButton>
  </Chat>
);

/* ---------- Taskbar ---------- */

const Bar = styled.div`
  height: 60px;
  flex: none;
  background: linear-gradient(90deg, #cde5ed, #d3e6ef 50%, #d5dfec 80%, #d4daea);
  display: flex;
  align-items: center;
  color: #111;
`;

const SearchBox = styled.div`
  width: 515px;
  height: 60px;
  margin-left: 24px;
  background: #fff;
  border: 2px solid #c9c9c9;
  border-width: 2px 1px;
  display: flex;
  align-items: center;
  color: #333;
`;

const App67 = styled.div<{ $on?: boolean; $partial?: boolean; $full?: boolean }>`
  width: 67px;
  height: 60px;
  flex: none;
  display: flex;
  align-items: center;
  justify-content: center;
  background:
    ${p => (p.$partial ? 'linear-gradient(90deg, #0078d7 78%, #65ade6 78%)' : 'linear-gradient(#0078d7, #0078d7)')} bottom center / ${p => (p.$full ? 67 : 54)}px 3px no-repeat,
    ${p => (p.$full ? '#edf5f9' : 'transparent')};
`;

const Square = styled.div<{ $bg: string }>`
  width: 36px;
  height: 36px;
  background: ${p => p.$bg};
  color: #fff;
  display: flex;
  align-items: center;
  justify-content: center;
  font: 700 23px/1 ${ui};
`;

const Clock = styled.div`
  width: 90px;
  margin-left: 13px;
  height: 50px;
  padding-top: 1px;
  display: flex;
  flex-direction: column;
  justify-content: space-between;
  align-items: center;
`;

const TaskBar = () => (
  <Bar>
    <Slot $w={24} $ml={24}>
      <svg width="24" height="24" viewBox="0 0 24 24"><path d="M0 3.500L10 2V11.500H0ZM11 1.900L24 0V11.500H11ZM0 12.500H10V22L0 20.500ZM11 12.500H24V24L11 22.100Z" /></svg>
    </Slot>
    <SearchBox>
      <Slot $w={25} $ml={17}><svg width="25" height="25" viewBox="0 0 25 25" fill="none" stroke="#222" strokeWidth="1.700"><circle cx="16" cy="9" r="8" /><path d="M10.500 15L.8 24.200" /></svg></Slot>
      <Slot $w={210} $ml={17}><Text $s={21.3} $pt={4}>Type here to search</Text></Slot>
    </SearchBox>
    <Slot $w={24} $ml={25}><svg width="24" height="24" viewBox="0 0 24 24"><circle cx="12" cy="12" r="10" fill="none" stroke="#000" strokeWidth="3.200" /></svg></Slot>
    <Slot $w={25} $ml={47}>
      <svg width="25" height="24" viewBox="0 0 25 24" fill="none" stroke="#000" strokeWidth="1.400"><path d="M1 0V3.500H16V0M1 24V20.500H16V24M23 0V5M23 12V24" /><rect x="1" y="6.500" width="15" height="11" /><rect x="22" y="7.500" width="2.200" height="2.500" fill="#000" stroke="none" /></svg>
    </Slot>
    <Slot $w={670} $ml={29}>
      <App67 $partial>
        <svg width="32" height="28" viewBox="0 0 32 28"><path d="M1 2Q1 0 3 0H13L16 4H1Z" fill="#d99a00" /><rect x="0" y="3" width="32" height="23" rx="1.500" fill="#ffd35c" /><path d="M5 16Q5 14 7 14H25Q27 14 27 16V27H20V20H12V27H5Z" fill="#3a96dd" /></svg>
      </App67>
      <App67 $full>
        <svg width="36" height="36" viewBox="0 0 36 36">
          <defs><linearGradient id="eg" x1="0" x2="1" y2=".5"><stop offset="0" stopColor="#2aa8e0" /><stop offset=".55" stopColor="#34c3c4" /><stop offset="1" stopColor="#62e048" /></linearGradient>
            <linearGradient id="eb" x1="0" x2="1" y2="1"><stop offset="0" stopColor="#1b8fd9" /><stop offset="1" stopColor="#0b4f9e" /></linearGradient></defs>
          <path d="M0 18C0 8 8 0 18 0S36 8 36 17C36 23 31 25 27 25C23 25 21 23.500 21 22.500C21 21.500 23 20.500 22.500 17.500C22 14 18 11 12 11C5 11 0 15 0 18Z" fill="url(#eg)" />
          <path d="M0 18C0 14 5 10.500 12 10.500C17 10.500 21 13 22.300 16C19 14.500 13 17 13.500 23C14 29 19.500 33 25 33.500C22 35.500 20 36 18 36C8 36 0 28 0 18Z" fill="url(#eb)" />
          <path d="M13.500 23C14.500 30 25 32 33 27.500C31 31 28 33 25 34.500C17 34 12 29 13.500 23Z" fill="#0c59a4" />
        </svg>
      </App67>
      <App67>
        <svg width="38" height="37" viewBox="0 0 38 37"><circle cx="19" cy="5" r="5" fill="#7b83eb" /><circle cx="31" cy="7" r="4" fill="#5059c9" /><path d="M25 13H37V24Q36 29 30 29H25Z" fill="#5059c9" /><path d="M11 12H28V26Q27 33 19 34Q12 33 11 27Z" fill="#7b83eb" /><rect x="0" y="8" width="20" height="19" rx="1.500" fill="#4b53bc" /><text x="10" y="23" textAnchor="middle" fill="#fff" fontFamily="Open Sans" fontWeight="700" fontSize="15">T</text><circle cx="30" cy="28" r="8.500" fill="#fff" /><circle cx="30" cy="28" r="7.300" fill="#6bb700" /><path d="M26 28L29 31L34 25" fill="none" stroke="#fff" strokeWidth="2" /></svg>
      </App67>
      <App67><svg width="33" height="32" viewBox="0 0 33 32"><rect width="33" height="32" rx="2" fill="#404040" /><path d="M17 32V19Q17 17 19 17H33L19 32Z" fill="#ffe000" /></svg></App67>
      <App67>
        <svg width="36" height="33" viewBox="0 0 36 33"><rect x="8" y="0" width="28" height="32" rx="2" fill="#ca64ea" /><path d="M28 8H36V16H28Z" fill="#ae4bd5" /><path d="M28 16H36V24H28Z" fill="#9332bf" /><path d="M28 24H36V32H28Z" fill="#7719aa" /><rect y="7" width="19" height="19" rx="1.500" fill="#7719aa" /><text x="9.500" y="21.500" textAnchor="middle" fill="#fff" fontFamily="Open Sans" fontWeight="700" fontSize="14">N</text></svg>
      </App67>
      <App67>
        <svg width="36" height="36" viewBox="0 0 36 36"><path d="M10 0H34V28H10Z" fill="#0f78d4" /><path d="M22 0H34V10H22ZM10 10H22V18H10Z" fill="#28a8ea" /><path d="M8 14L22 23L35 14V29Q35 31 33 31H10Q8 31 8 29Z" fill="#1a8fdc" /><rect y="7" width="19" height="19" rx="1.500" fill="#0f6cbd" /><text x="9.500" y="22" textAnchor="middle" fill="#fff" fontFamily="Open Sans" fontWeight="700" fontSize="14">O</text><rect x="17" y="22" width="22" height="17" fill="#e8b26b" /><path d="M18 23L28 34L38 23" fill="none" stroke="#fff" strokeWidth="1.600" /></svg>
      </App67>
      <App67>
        <svg width="36" height="36" viewBox="0 0 36 36"><path d="M0 0H36V36H0Z" fill="#8a2f86" /><path d="M36 0V36H24L36 0Z" fill="#3d2163" /><path d="M10.500 12V10.500Q10.500 5.500 18 5.500T25.500 10.500V12M10.500 15V24Q10.500 29.500 18 29.500T25.500 24V15" fill="none" stroke="#fff" strokeWidth="3.800" /><circle cx="18" cy="13" r="2" fill="#fff" /><path d="M18 26V32" stroke="#fff" strokeWidth="2" /></svg>
      </App67>
      <App67><Square $bg="#0067df">Ui</Square></App67>
      <App67 $partial>
        <svg width="36" height="33" viewBox="0 0 36 33"><rect x="8" y="0" width="28" height="32" rx="2" fill="#21a366" /><path d="M8 8H22V16H8Z" fill="#107c41" /><path d="M22 0H34Q36 0 36 2V8H22Z" fill="#33c481" /><path d="M8 16H36V32H10Q8 32 8 30Z" fill="#185c37" /><path d="M22 16H36V24H22Z" fill="#107c41" /><rect y="7" width="19" height="19" rx="1.500" fill="#107c41" /><text x="9.500" y="21.500" textAnchor="middle" fill="#fff" fontFamily="Open Sans" fontWeight="700" fontSize="14">X</text></svg>
      </App67>
      <App67><svg width="36" height="36" viewBox="0 0 36 36"><rect width="36" height="36" fill="#1eb455" /><rect x="4.500" y="5" width="27" height="26" fill="none" stroke="#fff" strokeWidth="2.500" /><path d="M12.500 11L24 18L12.500 25Z" fill="#fff" /></svg></App67>
    </Slot>
    <Slot $w={33} $ml={42}>
      <svg width="33" height="33" viewBox="0 0 33 33"><path d="M10.500 0Q18 6 15 13T0 16Q7 11 10.500 0Z" fill="#f9b41c" /><path d="M3 19Q3 14 9 14Q12 10 18 10Q25 10 26 15Q32 16 32 20Q32 24 28 24H9Q3 24 3 19Z" fill="#c9d4e6" /><path d="M9 17Q15 24 15 28A4 4 0 0 1 7 28Q5 24 9 17ZM22 17Q28 25 28 28.500A4.300 4.300 0 0 1 19.500 28.500Q18 24 22 17Z" fill="#2b9ae6" /></svg>
    </Slot>
    <Slot $w={70} $ml={12.5}><Text $s={20} $pt={4}>27°C</Text></Slot>
    <Slot $w={19}><svg width="19" height="11" viewBox="0 0 19 11" fill="none" stroke="#111" strokeWidth="1.500"><path d="M.7 10L9.500 1L18.300 10" /></svg></Slot>
    <Slot $w={24} $ml={14}><svg width="24" height="17" viewBox="0 0 24 17"><path d="M5 17Q0 17 0 12T5 7Q6 0 12 0T19 6Q24 6 24 11.500T19 17Z" fill="#1490df" /><path d="M5 7Q6 0 12 0T19 6Q15 6 12 11Q9 7 5 7Z" fill="#0a5cab" /></svg></Slot>
    <Slot $w={24} $ml={12}><svg width="24" height="18" viewBox="0 0 24 18" fill="none" stroke="#111" strokeWidth="1.300"><path d="M8 5H21V15H5V10M21 8H23.500V12H21" /><rect x="8" y="7" width="5" height="6" fill="#111" stroke="none" /><path d="M0 4H6V7Q6 9 3 9T0 7ZM1.500 4V0M4.500 4V0" /></svg></Slot>
    <Slot $w={24} $ml={12}><svg width="24" height="20" viewBox="0 0 24 20" fill="none" stroke="#111" strokeWidth="1.300"><path d="M5 1H23V14H5V8M13 14V18M8 18.500H18M1 1V7H5V1ZM3 7V15H8" /></svg></Slot>
    <Slot $w={22} $ml={13}><svg width="24" height="20" viewBox="0 0 24 20" fill="none" stroke="#111" strokeWidth="1.300"><path d="M1 7H4L9 2V18L4 13H1ZM12 6Q15 10 12 14M15.500 4Q20 10 15.500 16" /><path d="M19 2Q25 10 19 18" stroke="#999" /></svg></Slot>
    <Clock><Text $s={17} $ls={0.05}>9:49 PM</Text><Text $s={17} $ls={0.2}>7/7/2022</Text></Clock>
    <Slot $w={38} $ml={26}>
      <svg width="38" height="36" viewBox="0 0 38 36"><path d="M0 0H24V19H10L5 24V19H0Z" fill="#000" /><path d="M4 5H19M4 9.500H19M4 14H14" stroke="#d5dfec" strokeWidth="1.300" /><circle cx="22.500" cy="23.500" r="14" fill="#dedede" stroke="#777" strokeWidth="1.300" /><text x="22.500" y="29.500" textAnchor="middle" fontFamily="Open Sans" fontWeight="600" fontSize="16.500" fill="#111">32</text></svg>
    </Slot>
    <Rule $h={60} $ml={17} $c="#a3aab5" />
  </Bar>
);

export default function App() {
  return (
    <Page>
      <Global />
      <Browser />
      <OrangeHeader />
      <Tools />
      <Main>
        <Remote />
        <ChatPanel />
      </Main>
      <TaskBar />
    </Page>
  );
}
